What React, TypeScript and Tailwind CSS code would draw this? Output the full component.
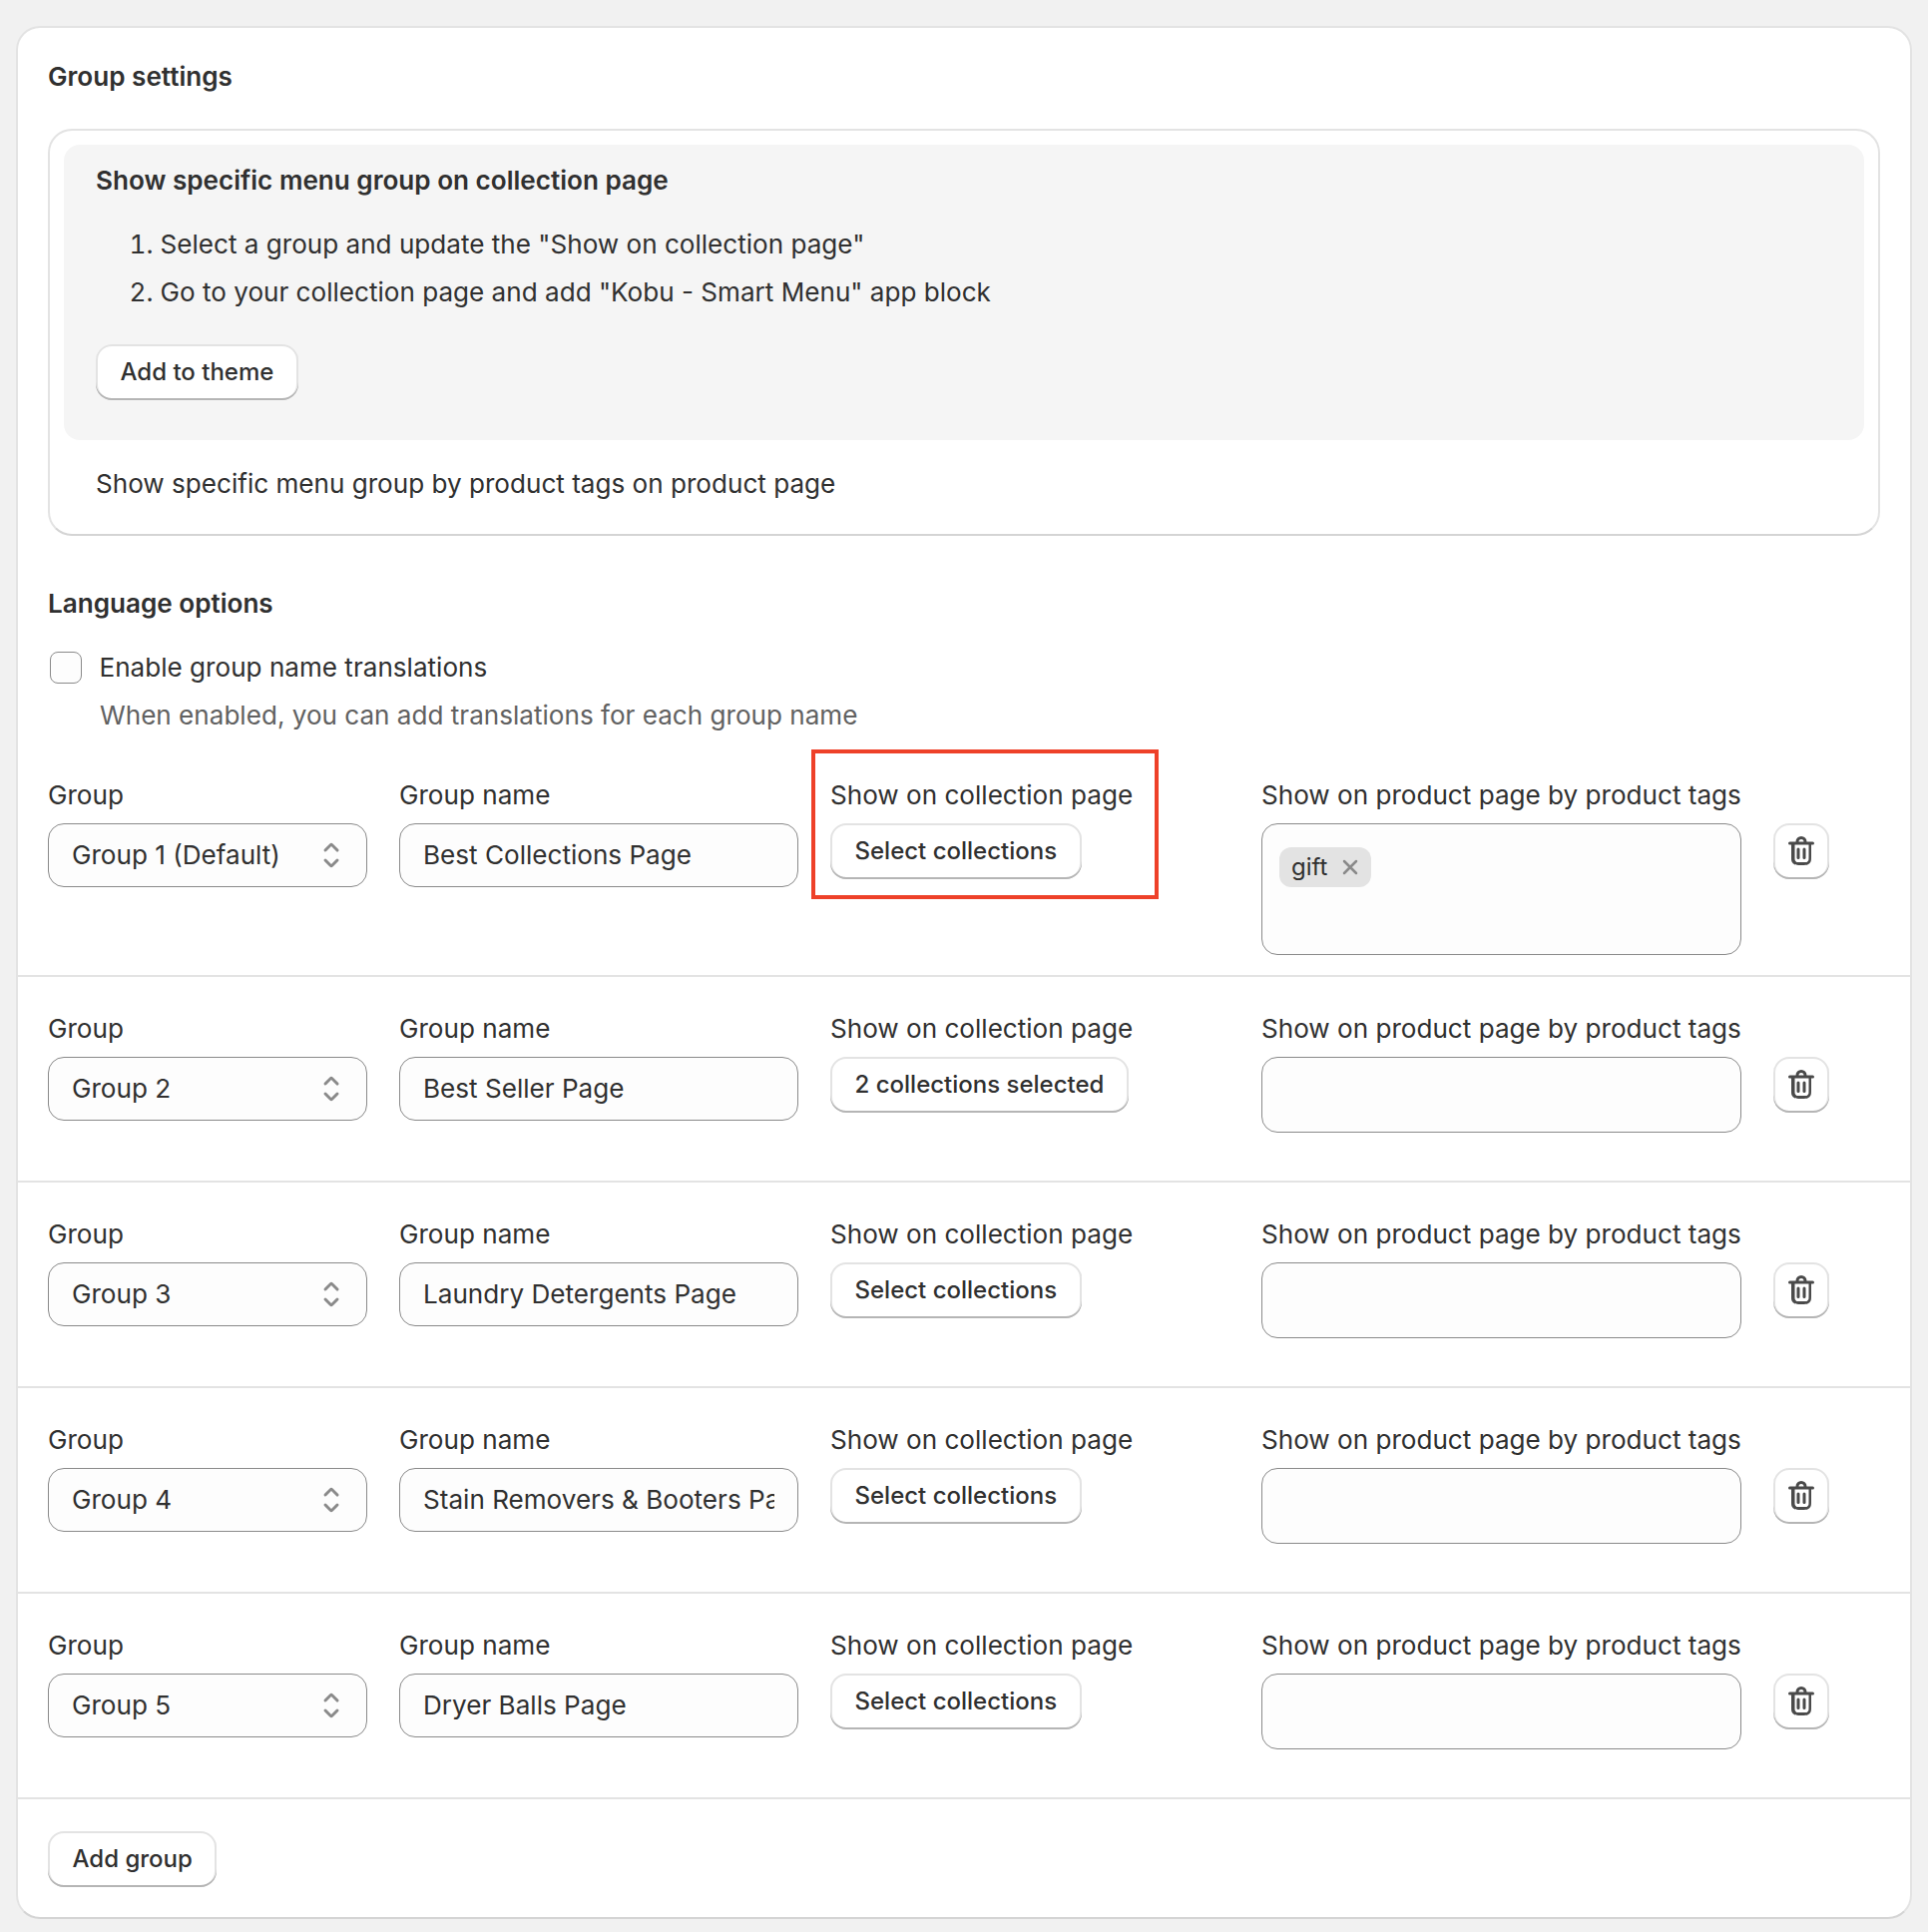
const SelectIcon = () => (
  <svg viewBox="0 0 20 20" className="w-10 h-10 shrink-0 fill-[#8a8a8a]">
    <path d="M10.884 4.323a1.25 1.25 0 0 0-1.768 0l-2.646 2.647a.75.75 0 0 0 1.06 1.06l2.47-2.47 2.47 2.47a.75.75 0 1 0 1.06-1.06l-2.646-2.647Z" />
    <path d="m13.53 13.03-2.646 2.647a1.25 1.25 0 0 1-1.768 0l-2.646-2.647a.75.75 0 0 1 1.06-1.06l2.47 2.47 2.47-2.47a.75.75 0 0 1 1.06 1.06Z" />
  </svg>
);

const TrashIcon = () => (
  <svg viewBox="0 0 20 20" className="w-10 h-10 fill-[#4a4a4a]">
    <path d="M11.5 8.25a.75.75 0 0 1 .75.75v4.25a.75.75 0 0 1-1.5 0v-4.25a.75.75 0 0 1 .75-.75Z" />
    <path d="M9.25 9a.75.75 0 0 0-1.5 0v4.25a.75.75 0 0 0 1.5 0v-4.25Z" />
    <path
      fillRule="evenodd"
      d="M7.25 5.25a2.75 2.75 0 0 1 5.5 0h3a.75.75 0 0 1 0 1.5h-.75v5.45c0 1.68 0 2.52-.327 3.162a3 3 0 0 1-1.311 1.311c-.642.327-1.482.327-3.162.327h-.4c-1.68 0-2.52 0-3.162-.327a3 3 0 0 1-1.311-1.311c-.327-.642-.327-1.482-.327-3.162v-5.45h-.75a.75.75 0 0 1 0-1.5h3Zm1.5 0a1.25 1.25 0 1 1 2.5 0h-2.5Zm-2.5 1.5h7.5v5.45c0 .865-.001 1.423-.036 1.848-.033.408-.09.559-.128.633a1.5 1.5 0 0 1-.655.655c-.074.038-.225.095-.633.128-.425.035-.983.036-1.848.036h-.4c-.865 0-1.423-.001-1.848-.036-.408-.033-.559-.09-.633-.128a1.5 1.5 0 0 1-.656-.655c-.037-.074-.094-.225-.127-.633-.035-.425-.036-.983-.036-1.848v-5.45Z"
    />
  </svg>
);

const btn =
  "inline-flex h-[56px] items-center justify-center rounded-2xl bg-white px-[24.5px] text-[24px] leading-10 font-[550] shadow-[inset_0_-2px_0_0_#b5b5b5,inset_0_0_0_2px_#e3e3e3]";

const groups = [
  { g: "Group 1 (Default)", n: "Best Collections Page", c: "Select collections", tag: true },
  { g: "Group 2", n: "Best Seller Page", c: "2 collections selected" },
  { g: "Group 3", n: "Laundry Detergents Page", c: "Select collections" },
  { g: "Group 4", n: "Stain Removers & Booters Page", c: "Select collections" },
  { g: "Group 5", n: "Dryer Balls Page", c: "Select collections" },
];

const field = "rounded-2xl border border-[#8a8a8a] bg-[#fdfdfd]";

const Row = ({ g, n, c, tag, first }: { g: string; n: string; c: string; tag?: boolean; first: boolean }) => (
  <div
    className={
      "relative grid grid-cols-[320px_400px_400px_481px_56px] gap-x-8 border-b-2 border-[#e3e3e3] pl-[30px] " +
      (first ? "pt-0 pb-[20px]" : "pt-[32px] pb-[48px]")
    }
  >
    <div>
      <div className="mb-2 leading-10">Group</div>
      <div className={"flex h-16 items-center justify-between pl-[23px] pr-[15px] " + field}>
        <span>{g}</span>
        <SelectIcon />
      </div>
    </div>
    <div>
      <div className="mb-2 leading-10">Group name</div>
      <div className={"flex h-16 items-center px-[23px] " + field}>
        <div className="overflow-hidden whitespace-nowrap">{n}</div>
      </div>
    </div>
    <div className="relative">
      <div className="mb-2 leading-10">Show on collection page</div>
      <button className={btn}>{c}</button>
      {first && (
        <div className="absolute left-[-19px] top-[-26px] h-[150px] w-[348px] border-[4px] border-[#ee4129]" />
      )}
    </div>
    <div>
      <div className="mb-2 whitespace-nowrap leading-10">Show on product page by product tags</div>
      {tag ? (
        <div className={"h-[132px] pl-[17px] pt-[22px] " + field}>
          <span className="inline-flex h-10 items-center rounded-xl bg-[#e3e3e3] pl-3 pr-[13px] text-[24px]">
            gift
            <svg viewBox="0 0 16 16" className="ml-[15px] h-4 w-4 stroke-[#8a8a8a]" fill="none" strokeWidth="2.5" strokeLinecap="round">
              <path d="M2 2l12 12M14 2L2 14" />
            </svg>
          </span>
        </div>
      ) : (
        <div className={"h-[76px] " + field} />
      )}
    </div>
    <div className="pt-12">
      <button className="flex h-[56px] w-[56px] items-center justify-center rounded-2xl bg-white shadow-[inset_0_-2px_0_0_#b5b5b5,inset_0_0_0_2px_#e3e3e3]">
        <TrashIcon />
      </button>
    </div>
  </div>
);

export default function App() {
  return (
    <div className="min-h-[1936px] bg-[#f1f1f1] pl-[16px] pt-[26px] text-[26.1px] text-[#303030] [font-family:Inter,sans-serif]">
      <div className="h-[1897px] w-[1900px] rounded-3xl border-2 border-[#e3e3e3] border-b-[#d4d4d4] bg-white">
        <div className="px-[30px] pt-[29px]">
          <h2 className="font-semibold leading-10">Group settings</h2>
          <div className="mt-8 w-[1835.5px] rounded-3xl border-2 border-[#e3e3e3] border-b-[#d4d4d4] p-[14px] pb-[30px]">
            <div className="rounded-2xl bg-[#f5f5f5] px-8 pb-10 pt-4">
              <h3 className="font-[648] leading-10">Show specific menu group on collection page</h3>
              <ol className="mt-6 flex list-decimal flex-col gap-2 pl-[64.5px]">
                <li className="leading-10">Select a group and update the "Show on collection page"</li>
                <li className="leading-10">Go to your collection page and add "Kobu - Smart Menu" app block</li>
              </ol>
              <button className={btn + " mt-[32px]"}>Add to theme</button>
            </div>
            <div className="mt-[24px] pl-8 leading-10">Show specific menu group by product tags on product page</div>
          </div>
          <h2 className="mt-12 font-semibold leading-10">Language options</h2>
          <div className="mt-[24px] flex items-center pl-[1.5px]">
            <span className="h-8 w-8 rounded-lg border border-[#8a8a8a] bg-[#fdfdfd]" />
            <span className="ml-[18px] leading-10">Enable group name translations</span>
          </div>
          <div className="mt-[8px] pl-[52px] leading-10 text-[#616161]">When enabled, you can add translations for each group name</div>
        </div>
        <div className="mt-10">
          {groups.map((r, i) => (
            <Row key={i} {...r} first={i === 0} />
          ))}
        </div>
        <div className="pl-[30px] pt-[32px]">
          <button className={btn}>Add group</button>
        </div>
      </div>
    </div>
  );
}
